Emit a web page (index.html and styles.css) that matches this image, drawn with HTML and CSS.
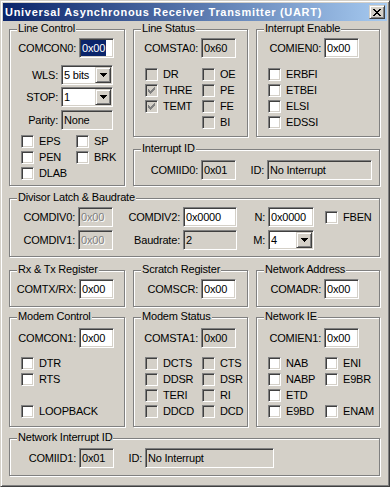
FILE: index.html
```html
<!DOCTYPE html>
<html lang="en">
<head>
  <meta charset="UTF-8" />
  <title>UART</title>
  <link rel="stylesheet" href="styles.css">
</head>
<body>
  <div class="window">
    <div class="titlebar">
      <span class="title">Universal Asynchronous Receiver Transmitter (UART)</span>
      <span class="close">
        <svg width="8" height="7" viewBox="0 0 8 7"><path d="M0 0h2v1H0z M6 0h2v1H6z M1 1h2v1H1z M5 1h2v1H5z M2 2h4v1H2z M3 3h2v1H3z M2 4h4v1H2z M1 5h2v1H1z M5 5h2v1H5z M0 6h2v1H0z M6 6h2v1H6z" fill="#000"/></svg>
      </span>
    </div>

    <div class="client">
      <div class="row-top">
        <div class="group c1 span2">
          <span class="legend">Line Control</span>
          <div class="reg"><span class="lbl">COMCON0:</span><span class="edit"><span class="sel">0x00</span></span></div>
          <div class="reg short wls"><span class="lbl">WLS:</span>
            <span class="combo"><span class="val">5 bits</span><span class="drop"><svg width="7" height="4" viewBox="0 0 7 4"><path d="M0 0h7v1h-1v1h-1v1h-1v1h-1v-1h-1v-1h-1v-1h-1z"/></svg></span></span>
          </div>
          <div class="reg short stop"><span class="lbl">STOP:</span>
            <span class="combo"><span class="val">1</span><span class="drop"><svg width="7" height="4" viewBox="0 0 7 4"><path d="M0 0h7v1h-1v1h-1v1h-1v1h-1v-1h-1v-1h-1v-1h-1z"/></svg></span></span>
          </div>
          <div class="reg short parity"><span class="lbl">Parity:</span><span class="edit ro wide52">None</span></div>
          <div class="checks lc">
            <div class="chk"><span class="box"></span>EPS</div>
            <div class="chk"><span class="box"></span>SP</div>
            <div class="chk"><span class="box"></span>PEN</div>
            <div class="chk"><span class="box"></span>BRK</div>
            <div class="chk"><span class="box"></span>DLAB</div>
          </div>
        </div>

        <div class="group">
          <span class="legend">Line Status</span>
          <div class="reg"><span class="lbl">COMSTA0:</span><span class="edit ro">0x60</span></div>
          <div class="checks two after-reg">
            <div class="chk"><span class="box dis"></span>DR</div>
            <div class="chk"><span class="box dis"></span>OE</div>
            <div class="chk"><span class="box dis"><svg width="7" height="7" viewBox="0 0 7 7"><path d="M0 2h1v3H0z M1 3h1v3H1z M2 4h1v3H2z M3 3h1v3H3z M4 2h1v3H4z M5 1h1v3H5z M6 0h1v3H6z" fill="#808080"/></svg></span>THRE</div>
            <div class="chk"><span class="box dis"></span>PE</div>
            <div class="chk"><span class="box dis"><svg width="7" height="7" viewBox="0 0 7 7"><path d="M0 2h1v3H0z M1 3h1v3H1z M2 4h1v3H2z M3 3h1v3H3z M4 2h1v3H4z M5 1h1v3H5z M6 0h1v3H6z" fill="#808080"/></svg></span>TEMT</div>
            <div class="chk"><span class="box dis"></span>FE</div>
            <div></div>
            <div class="chk"><span class="box dis"></span>BI</div>
          </div>
        </div>

        <div class="group c3">
          <span class="legend">Interrupt Enable</span>
          <div class="reg"><span class="lbl">COMIEN0:</span><span class="edit">0x00</span></div>
          <div class="checks after-reg">
            <div class="chk"><span class="box"></span>ERBFI</div>
            <div class="chk"><span class="box"></span>ETBEI</div>
            <div class="chk"><span class="box"></span>ELSI</div>
            <div class="chk"><span class="box"></span>EDSSI</div>
          </div>
        </div>

        <div class="group iid">
          <span class="legend">Interrupt ID</span>
          <div class="reg"><span class="lbl">COMIID0:</span><span class="edit ro">0x01</span><span class="lbl id">ID:</span><span class="edit ro wide105">No Interrupt</span></div>
        </div>
      </div>

      <div class="group divisor">
        <span class="legend">Divisor Latch &amp; Baudrate</span>
        <div class="div-grid">
          <span class="lbl">COMDIV0:</span><span class="edit dis">0x00</span>
          <span class="lbl">COMDIV2:</span><span class="edit wide54">0x0000</span>
          <span class="lbl">N:</span><span class="edit wide46">0x0000</span>
          <div class="chk fben"><span class="box"></span>FBEN</div>
          <span class="lbl">COMDIV1:</span><span class="edit dis">0x00</span>
          <span class="lbl">Baudrate:</span><span class="edit ro wide54">2</span>
          <span class="lbl">M:</span>
          <span class="combo wide46"><span class="val">4</span><span class="drop"><svg width="7" height="4" viewBox="0 0 7 4"><path d="M0 0h7v1h-1v1h-1v1h-1v1h-1v-1h-1v-1h-1v-1h-1z"/></svg></span></span>
          <span></span>
        </div>
      </div>

      <div class="row regs">
        <div class="group c1">
          <span class="legend">Rx &amp; Tx Register</span>
          <div class="reg"><span class="lbl">COMTX/RX:</span><span class="edit">0x00</span></div>
        </div>
        <div class="group">
          <span class="legend">Scratch Register</span>
          <div class="reg"><span class="lbl">COMSCR:</span><span class="edit">0x00</span></div>
        </div>
        <div class="group">
          <span class="legend">Network Address</span>
          <div class="reg"><span class="lbl">COMADR:</span><span class="edit">0x00</span></div>
        </div>
      </div>

      <div class="row modem">
        <div class="group c1">
          <span class="legend">Modem Control</span>
          <div class="reg"><span class="lbl">COMCON1:</span><span class="edit">0x00</span></div>
          <div class="checks after-modem">
            <div class="chk"><span class="box"></span>DTR</div>
            <div class="chk"><span class="box"></span>RTS</div>
            <div></div>
            <div class="chk"><span class="box"></span>LOOPBACK</div>
          </div>
        </div>
        <div class="group">
          <span class="legend">Modem Status</span>
          <div class="reg"><span class="lbl">COMSTA1:</span><span class="edit ro">0x00</span></div>
          <div class="checks two after-modem">
            <div class="chk"><span class="box dis"></span>DCTS</div>
            <div class="chk"><span class="box dis"></span>CTS</div>
            <div class="chk"><span class="box dis"></span>DDSR</div>
            <div class="chk"><span class="box dis"></span>DSR</div>
            <div class="chk"><span class="box dis"></span>TERI</div>
            <div class="chk"><span class="box dis"></span>RI</div>
            <div class="chk"><span class="box dis"></span>DDCD</div>
            <div class="chk"><span class="box dis"></span>DCD</div>
          </div>
        </div>
        <div class="group">
          <span class="legend">Network IE</span>
          <div class="reg"><span class="lbl">COMIEN1:</span><span class="edit">0x00</span></div>
          <div class="checks two after-modem">
            <div class="chk"><span class="box"></span>NAB</div>
            <div class="chk"><span class="box"></span>ENI</div>
            <div class="chk"><span class="box"></span>NABP</div>
            <div class="chk"><span class="box"></span>E9BR</div>
            <div class="chk"><span class="box"></span>ETD</div>
            <div></div>
            <div class="chk"><span class="box"></span>E9BD</div>
            <div class="chk"><span class="box"></span>ENAM</div>
          </div>
        </div>
      </div>

      <div class="group c1 niid">
        <span class="legend">Network Interrupt ID</span>
        <div class="reg"><span class="lbl">COMIID1:</span><span class="edit ro">0x01</span><span class="lbl id">ID:</span><span class="edit ro wide130">No Interrupt</span></div>
      </div>
    </div>
  </div>
</body>
</html>
```

FILE: styles.css
```css
html, body {
  margin: 0;
  padding: 0;
  background: #D4D0C8;
}

body {
  font-family: "Liberation Sans", Arial, sans-serif;
  font-size: 11px;
  letter-spacing: -0.2px;
  color: #000;
}

.window {
  width: 390px;
  height: 487px;
  box-sizing: border-box;
  border: 1px solid;
  border-color: #D4D0C8 #404040 #404040 #D4D0C8;
  box-shadow: inset 1px 1px #fff, inset -1px -1px #808080;
  padding: 2px;
  background: #D4D0C8;
  overflow: hidden;
}

.titlebar {
  height: 18px;
  display: flex;
  align-items: center;
  padding-left: 2px;
  background: linear-gradient(to right, #0A246A, #A6CAF0);
  color: #fff;
  font-weight: bold;
}

.title {
  flex: 1;
  line-height: 18px;
  letter-spacing: 0.7px;
  white-space: nowrap;
}

.close {
  width: 16px;
  height: 14px;
  margin-right: 2px;
  box-sizing: border-box;
  background: #D4D0C8;
  border: 1px solid;
  border-color: #D4D0C8 #404040 #404040 #D4D0C8;
  box-shadow: inset 1px 1px #fff, inset -1px -1px #808080;
  display: flex;
  align-items: center;
  justify-content: center;
}

.client {
  padding: 8px 0 0 6px;
}

/* group boxes */
.row-top,
.row {
  display: grid;
  grid-template-columns: 116px 115px 124px;
  column-gap: 8px;
}

.row-top {
  grid-template-rows: 108px 37px;
  row-gap: 12px;
}

.span2 {
  grid-row: 1 / 3;
}

.iid {
  grid-column: 2 / 4;
  padding-top: 10px !important;
}

.group {
  position: relative;
  box-sizing: border-box;
  border: 1px solid #808080;
  box-shadow: inset 1px 1px #fff, 1px 1px #fff;
  padding-top: 8px;
}

.legend {
  position: absolute;
  top: -8px;
  left: 7px;
  padding: 0 1px;
  line-height: 13px;
  background: #D4D0C8;
  white-space: nowrap;
}

.divisor {
  width: 371px;
  height: 59px;
  margin-top: 12px;
}

.regs {
  height: 37px;
  margin-top: 13px;
}

.modem {
  height: 110px;
  margin-top: 10px;
}

.modem .group {
  padding-top: 10px;
}

.niid {
  width: 371px;
  height: 38px;
  margin-top: 11px;
  padding-top: 9px;
}

/* label + field rows */
.reg {
  display: flex;
  align-items: center;
  height: 20px;
}

.lbl {
  flex: none;
  width: 67px;
  padding-right: 3px;
  box-sizing: border-box;
  text-align: right;
  white-space: nowrap;
  line-height: 13px;
}

.c1 .lbl {
  width: 69px;
}

.c1 .short .lbl {
  width: 51px;
}

.lbl.id {
  width: 31px !important;
}

.wls { margin-top: 7px; }
.stop { margin-top: 2px; }
.parity { margin-top: 3px; }

.edit {
  flex: none;
  box-sizing: border-box;
  width: 35px;
  height: 20px;
  border: 1px solid;
  border-color: #808080 #fff #fff #808080;
  box-shadow: inset 1px 1px #404040, inset -1px -1px #D4D0C8;
  background: #fff;
  padding-left: 2px;
  line-height: 18px;
  white-space: nowrap;
  overflow: hidden;
}

.edit.ro {
  background: #D4D0C8;
}

.edit.dis {
  background: #D4D0C8;
  color: #808080;
  text-shadow: 1px 1px #fff;
}

.wide46 { width: 46px; }
.wide52 { width: 52px; }
.wide54 { width: 54px; }
.wide105 { width: 105px; }
.wide130 { width: 129px; }

.sel {
  display: inline-block;
  margin-left: -1px;
  padding: 0 1px;
  line-height: 16px;
  background: #0A246A;
  color: #fff;
}

.combo {
  flex: none;
  display: flex;
  box-sizing: border-box;
  width: 52px;
  height: 20px;
  padding: 1px;
  border: 1px solid;
  border-color: #808080 #fff #fff #808080;
  box-shadow: inset 1px 1px #404040, inset -1px -1px #D4D0C8;
  background: #fff;
}

.combo.wide46 {
  width: 46px;
}

.combo .val {
  flex: 1;
  padding-left: 1px;
  line-height: 16px;
  white-space: nowrap;
}

.drop {
  width: 16px;
  height: 16px;
  box-sizing: border-box;
  background: #D4D0C8;
  border: 1px solid;
  border-color: #D4D0C8 #404040 #404040 #D4D0C8;
  box-shadow: inset 1px 1px #fff, inset -1px -1px #808080;
  display: flex;
  align-items: center;
  justify-content: center;
}

/* checkboxes */
.checks {
  display: grid;
  grid-auto-rows: 13px;
  row-gap: 3px;
  padding-left: 11px;
}

.checks.two {
  grid-template-columns: 57px auto;
}

.checks.lc {
  grid-template-columns: 55px auto;
  margin-top: 5px;
}

.after-reg { margin-top: 10px; }
.after-modem { margin-top: 9px; }

.chk {
  display: flex;
  align-items: center;
  gap: 4px;
  height: 13px;
  line-height: 13px;
  white-space: nowrap;
}

.box {
  flex: none;
  box-sizing: border-box;
  width: 13px;
  height: 13px;
  margin-right: 1px;
  border: 1px solid;
  border-color: #808080 #fff #fff #808080;
  box-shadow: inset 1px 1px #404040, inset -1px -1px #D4D0C8;
  background: #fff;
  display: flex;
  align-items: center;
  justify-content: center;
}

.box.dis {
  background: #D4D0C8;
}

/* divisor latch grid */
.div-grid {
  display: grid;
  grid-template-columns: 68px 35px 70px 54px 31px 46px auto;
  grid-template-rows: 20px 20px;
  row-gap: 3px;
  align-items: center;
}

.div-grid .lbl {
  width: auto;
}

.fben {
  margin-left: 11px;
}
```
